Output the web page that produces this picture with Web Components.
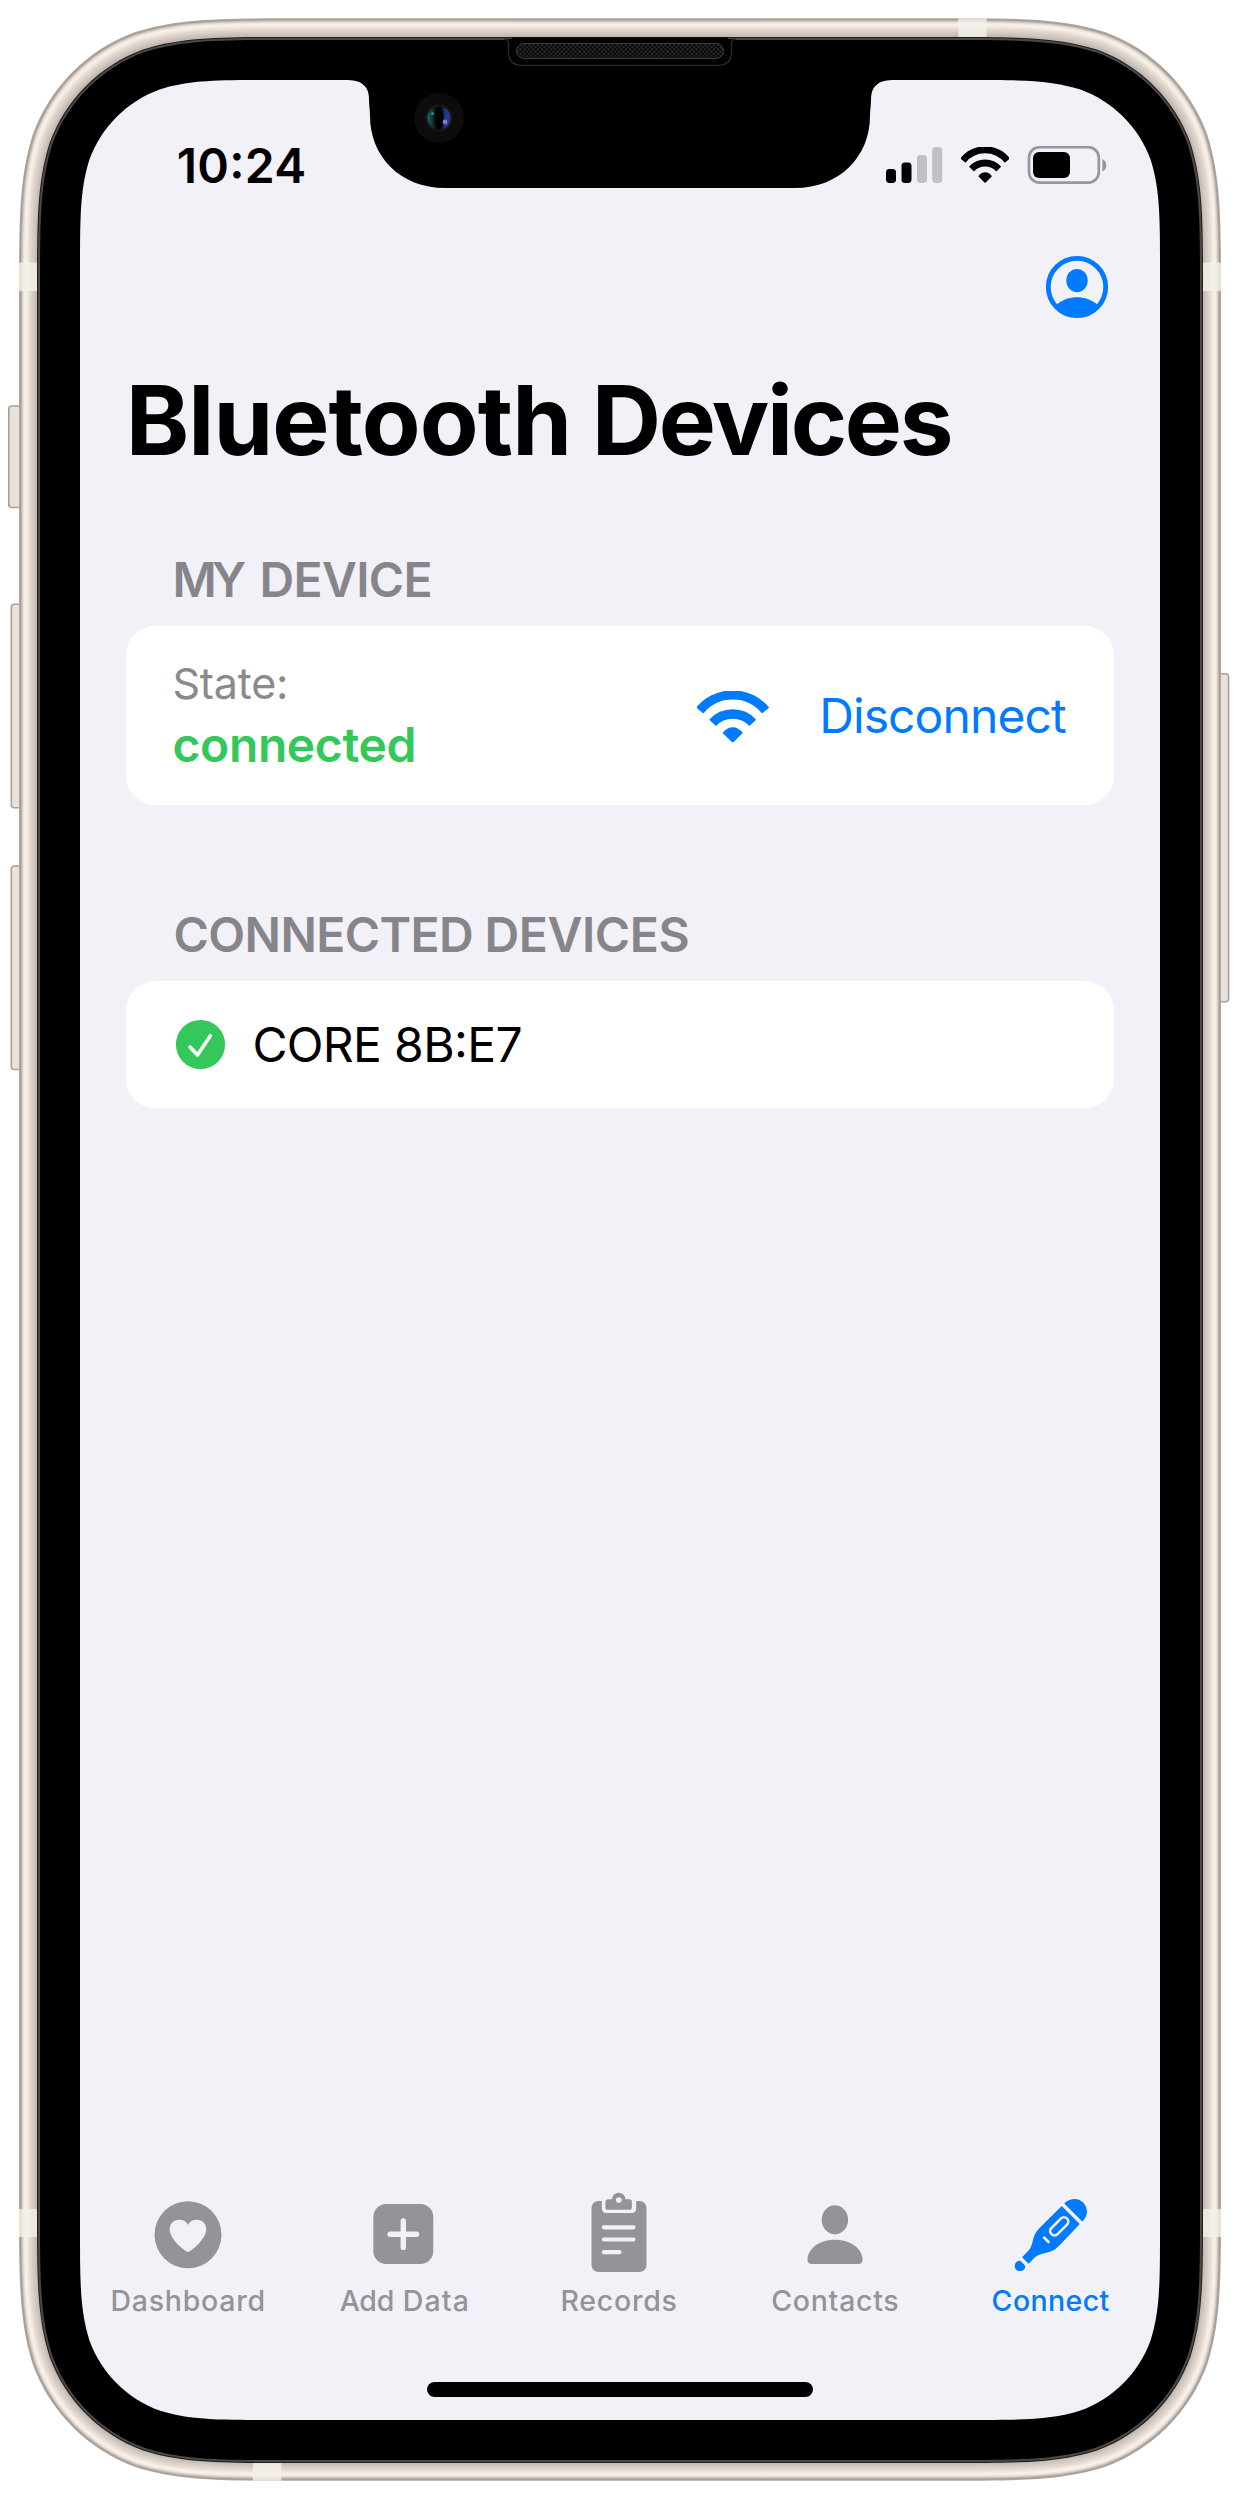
<!DOCTYPE html>
<html lang="en">
<head>
<meta charset="utf-8">
<title>Bluetooth Devices</title>
<style>
  body { margin: 0; background: #fff; font-family: Inter, "Liberation Sans", sans-serif; }
</style>
</head>
<body>
<phone-frame>
  <status-bar slot="status" time="10:24"></status-bar>
  <nav-bar slot="nav" heading="Bluetooth Devices" w="434.5,31.5,353"></nav-bar>
  <list-section heading="MY DEVICE" w="70.5,16.5,168"></list-section>
  <list-section heading="CONNECTED DEVICES" w="296.5,15.5,200"></list-section>
  <tab-bar slot="tabs">
    <tab-item icon="heart" label="Dashboard" w="151"></tab-item>
    <tab-item icon="plus" label="Add Data" w="53,12,63"></tab-item>
    <tab-item icon="clipboard" label="Records" w="114"></tab-item>
    <tab-item icon="person" label="Contacts" w="126"></tab-item>
    <tab-item icon="thermometer" label="Connect" w="117" active></tab-item>
  </tab-bar>
</phone-frame>
<template id="rows">
  <device-state-row label="State:" state="connected" action="Disconnect"></device-state-row>
  <device-row name="CORE 8B:E7" w="124.5,17,124.5"></device-row>
</template>

<script>
/* Each section receives its own row before the elements are upgraded. */
{
  const rows = [...document.getElementById('rows').content.children];
  document.querySelectorAll('list-section').forEach((s, i) => s.append(rows[i]));
}

const wifiShape = (sw) => `
  <path d="M699.8 710 A42.6 42.6 0 0 1 765.6 710" fill="none" stroke="currentColor" stroke-width="${sw}"/>
  <path d="M712.6 722.3 A27.4 27.4 0 0 1 752.8 722.3" fill="none" stroke="currentColor" stroke-width="${sw}"/>
  <path d="M722.6 732.4 C728 724.8 737.4 724.8 742.8 732.4 L733.6 741.6 Q732.7 742.4 731.8 741.6Z" fill="currentColor"/>`;

const ICONS = {
  wifi: { box: '697 690.5 71.6 52', w: 71.6, h: 52, art: wifiShape(9.3) },
  wifiSmall: { box: '697 690.5 71.6 52', w: 48.4, h: 36.2, art: wifiShape(9.8) },
  signal: { box: '886 147 57 36', w: 57, h: 36, art: `
    <rect x="886" y="169" width="10" height="14" rx="3.4"/><rect x="901.5" y="162.5" width="10" height="20.5" rx="3.4"/>
    <g fill="#c1c0c5"><rect x="917" y="155" width="10" height="28" rx="3.4"/><rect x="932.2" y="147" width="10" height="36" rx="3.4"/></g>` },
  battery: { box: '1027 146 80 38', w: 80, h: 38, art: `
    <rect x="1029" y="147.2" width="69.8" height="35.4" rx="10.5" fill="none" stroke="#98979c" stroke-width="2.7"/>
    <rect x="1033" y="152" width="37" height="26" rx="6"/>
    <path d="M1102.3 159 C1107.6 161 1107.6 169.5 1102.3 171.5Z" fill="#98979c"/>` },
  profile: { box: '1045 255 64 64', w: 64, h: 64, art: `
    <circle cx="1077" cy="287" r="28.7" fill="none" stroke="currentColor" stroke-width="4.8"/>
    <ellipse cx="1077" cy="280.6" rx="10.7" ry="11.7"/>
    <path d="M1056.5 305 C1062 299.6 1070 297.3 1077 297.3 C1084 297.3 1092 299.6 1097.5 305 L1100 307 A31 31 0 0 1 1054 307Z"/>` },
  check: { box: '175 1019 51 51', w: 51, h: 51, art: `
    <circle cx="200.5" cy="1044.5" r="24.6"/>
    <path d="M190 1047 L197.5 1055 L210.4 1035.7" fill="none" stroke="#fff" stroke-width="3.6" stroke-linecap="round" stroke-linejoin="round"/>` },
  heart: { box: '142.3 2190 90 90', w: 90, h: 90, art: `
    <circle cx="187.3" cy="2234.7" r="33.5"/>
    <path fill="#f2f1f7" d="M187.3 2252 C185 2251.5 169 2240 169 2229 C169 2223.5 173 2219.7 178.5 2219.7 C182.5 2219.7 185.8 2221.6 187.3 2224.8 C188.8 2221.6 192 2219.7 196 2219.7 C201.5 2219.7 205.5 2223.5 205.5 2229 C205.5 2240 189.6 2251.5 187.3 2252Z"/>` },
  plus: { box: '358.7 2190 90 90', w: 90, h: 90, art: `
    <rect x="373" y="2204" width="60" height="60" rx="13"/>
    <path d="M389.8 2234.2 H416.2 M403 2221 V2247.4" stroke="#f2f1f7" stroke-width="5.4" stroke-linecap="round"/>` },
  clipboard: { box: '-16.5 15 270 270', w: 90, h: 90, art: `
    <rect x="36" y="48" width="165" height="213" rx="21"/>
    <path d="M67 40 V70 Q67 84 81 84 H156 Q170 84 170 70 V40Z" fill="#f2f1f7"/>
    <rect x="78" y="42.5" width="79" height="32" rx="8"/><path d="M97 44 A20.5 20.5 0 0 1 138 44Z"/>
    <circle cx="118" cy="45" r="8.5" fill="#f2f1f7"/>
    <path d="M73 127 H162 M73 163.5 H162 M73 201.5 H120" stroke="#f2f1f7" stroke-width="12.5" stroke-linecap="round"/>` },
  person: { box: '790.3 2190 90 90', w: 90, h: 90, art: `
    <ellipse cx="835.2" cy="2219.8" rx="13.2" ry="14.6"/>
    <path d="M812 2264 Q807.8 2264 807.8 2259.6 C807.8 2250 818 2239.7 835.3 2239.7 C852.6 2239.7 862.8 2250 862.8 2259.6 Q862.8 2264 858.6 2264Z"/>` },
  thermometer: { box: '-11.7 0 270 270', w: 90, h: 90, art: `
    <path d="M163 40.5 C179 24 204 22 219 37 C235 53 236 78 217 94.5Z"/>
    <path d="M155.5 48 L209.5 102 L147 168 C133 182 121 186 99 190.5 C86 194 79 198 72 205 L56 221 L36.5 201.5 L52 186 C61 177 65 168 68 155 C71 138 77 126 89 114Z"/>
    <path d="M31 212 L46 227 C46 237 40 243 30 243 C20 243 14.5 236 14.5 228 C14.5 219 21 212 31 212Z"/>
    <rect x="115" y="96" width="66" height="26" rx="13" transform="rotate(-45 148 109)" fill="none" stroke="#f2f1f7" stroke-width="7.6"/>
    <path d="M102.5 142.5 L116 156" stroke="#f2f1f7" stroke-width="7.6" stroke-linecap="round"/>` }
};

/* Outline of a rectangle with continuous-curvature corners. */
function smoothRect(x, y, w, h, r) {
  const corner = [[1.528665, 0], [1.08849, 0, .868407, 0, .631494, .0749114],
    [.372824, .16906, .16906, .372824, .0749114, .631494], [0, .868407, 0, 1.08849, 0, 1.528665]];
  const back = [[0, 1.528665], [0, 1.08849, 0, .868407, .0749114, .631494],
    [.16906, .372824, .372824, .16906, .631494, .0749114], [.868407, 0, 1.08849, 0, 1.528665, 0]];
  const place = (pts, f) => {
    const o = [];
    for (let i = 0; i < pts.length; i += 2) o.push(f(pts[i] * r, pts[i + 1] * r).map(n => n.toFixed(2)).join(' '));
    return o.join(' ');
  };
  const seg = (c, f) => c.map((p, i) => (i ? 'C' : 'L') + place(p, f)).join('');
  const d = seg(corner, (a, b) => [x + w - a, y + b]) + seg(back, (a, b) => [x + w - a, y + h - b]) +
            seg(corner, (a, b) => [x + a, y + h - b]) + seg(back, (a, b) => [x + a, y + b]);
  return 'M' + d.slice(1) + 'Z';
}

class Base extends HTMLElement {
  connectedCallback() {
    if (this.shadowRoot) return;
    this.attachShadow({ mode: 'open' }).innerHTML = this.view();
  }
  a(n) { return this.getAttribute(n) || ''; }
}

/* Single line of text whose words are tracked to given ink widths: "word" or "word,gap,word". */
customElements.define('tracked-text', class extends Base {
  view() { return `<style>:host{display:block;white-space:pre;line-height:1}.line{display:block}</style><span class="line"></span>`; }
  connectedCallback() {
    super.connectedCallback();
    const line = this.shadowRoot.querySelector('.line'), cs = getComputedStyle(this);
    const sizes = this.a('w').split(',').map(Number);
    const words = sizes.length > 1 ? this.a('text').split(' ') : [this.a('text')];
    const c = document.createElement('canvas').getContext('2d');
    c.font = `${cs.fontWeight} ${cs.fontSize} ${cs.fontFamily}`;
    const spaceWidth = c.measureText(' ').width;
    const parts = words.map((t, i) => {
      const m = c.measureText(t), L = m.actualBoundingBoxLeft, R = m.actualBoundingBoxRight;
      return { t, L, rest: m.width - R, ls: (sizes[i * 2] - L - R) / (t.length - 1) };
    });
    let html = '';
    parts.forEach((p, i) => {
      if (i) {
        const q = parts[i - 1];
        const ls = sizes[i * 2 - 1] - q.rest - q.ls - spaceWidth + p.L;
        html += `<span style="letter-spacing:${ls.toFixed(3)}px"> </span>`;
      }
      html += `<span style="letter-spacing:${p.ls.toFixed(3)}px">${p.t}</span>`;
    });
    const last = parts[parts.length - 1];
    line.innerHTML = html;
    line.style.margin = `0 ${(-last.ls - last.rest).toFixed(2)}px 0 ${parts[0].L.toFixed(2)}px`;
  }
});

customElements.define('ui-icon', class extends Base {
  view() {
    const i = ICONS[this.a('name')];
    return `<style>:host{display:block;flex:none}svg{display:block}</style>
      <svg width="${i.w}" height="${i.h}" viewBox="${i.box}" preserveAspectRatio="none" fill="currentColor">${i.art}</svg>`;
  }
});

customElements.define('phone-frame', class extends Base {
  view() {
    const tones = ['#aea69f','#a69d96','#beb5ae','#d9d0c9','#e9e1da','#f3ebe4','#f8f1ea','#f5eee7','#f0e8e1','#ebe3db','#e5dcd4','#e0d7cf','#dcd3ca','#d8cec6','#d4cac1','#d0c6bd','#cbc1b8','#c4bab1'];
    const metal = tones.map((t, i) => `<path fill="${t}" d="${smoothRect(19 + i, 18.3 + i, 1202 - 2 * i, 2462.5 - 2 * i, 184 - i)}"/>`).join('');
    const band = (x, y, w, h) => `<rect x="${x}" y="${y}" width="${w}" height="${h}" fill="#f4f1ea" fill-opacity=".8"/>`;
    const button = (x, y, w, h) => `<rect x="${x}" y="${y}" width="${w}" height="${h}" rx="3" fill="#e9e2db" stroke="#aaa099" stroke-width="1.6"/>`;
    return `<style>
      :host{display:grid;width:1240px;height:2500px;grid-template:100% / 100%}
      svg,.screen{grid-area:1/1}
      svg{display:block}
      .screen{box-sizing:border-box;margin:80px;display:flex;flex-direction:column;color:#000}
      main{flex:1;display:flex;flex-direction:column;gap:116.2px;padding:98px 46px 0;box-sizing:border-box}
      .home{width:386px;height:14.4px;border-radius:8px;background:#000;margin:0 auto 23.3px;flex:none}
    </style>
    <svg width="1240" height="2500" viewBox="0 0 1240 2500">
      <defs>
        <pattern id="mesh" width="4.4" height="4.4" patternUnits="userSpaceOnUse"><rect width="4.4" height="4.4" fill="#080808"/><circle cx="1.1" cy="1.1" r="1" fill="#333"/><circle cx="3.3" cy="3.3" r="1" fill="#333"/></pattern>
        <linearGradient id="lens"><stop offset="0" stop-color="#1a6a5c"/><stop offset=".35" stop-color="#041210"/><stop offset=".55" stop-color="#02040c"/><stop offset=".8" stop-color="#1b3f9c"/><stop offset="1" stop-color="#3d2a78"/></linearGradient>
      </defs>
      ${button(8.8, 406, 16, 101.5)}${button(11.3, 604.3, 14, 203.5)}${button(11.3, 866, 14, 203.5)}${button(1214, 673.8, 14.6, 328)}
      ${metal}
      ${band(19, 262.5, 20, 28.5)}${band(1201, 262.5, 20, 28.5)}${band(19, 2209, 20, 28)}${band(1201, 2209, 20, 28)}
      ${band(958.3, 18.3, 28.5, 19)}${band(253, 2462, 28.5, 18.8)}
      <path fill="#1d1d1d" d="${smoothRect(37, 37, 1166, 2426, 168)}"/>
      <path fill="#4a4a4a" d="${smoothRect(38, 38, 1164, 2424, 167)}"/>
      <path fill="#000" d="${smoothRect(40, 40, 1160, 2420, 165)}"/>
      <path d="M504 39 Q508.5 39 508.5 44 V52 Q508.5 65.3 522 65.3 H718 Q731.5 65.3 731.5 52 V44 Q731.5 39 736 39" fill="#000" stroke="#2b2b2b" stroke-width="1.3"/>
      <rect x="512" y="37.5" width="216" height="3" fill="#050505"/>
      <rect x="516.5" y="43.5" width="207" height="15" rx="7.5" fill="url(#mesh)" stroke="#3a3a3a" stroke-width="1"/>
      <path fill="#f2f1f7" d="${smoothRect(80, 80, 1080, 2340, 126)}"/>
      <path fill="#000" d="M345 79 V80 C361 80 369 85 369 100 C369 105 370 110 370 116 C370 156 400 188 445 188 H795 C840 188 870 156 870 116 C870 110 871 105 871 100 C871 85 879 80 895 80 V79Z"/>
      <circle cx="439" cy="118" r="25" fill="#0c0c0d"/><circle cx="439" cy="118" r="13.5" fill="#17171a"/><circle cx="439" cy="118" r="11.5" fill="url(#lens)"/>
      <ellipse cx="439" cy="118" rx="4.5" ry="11.5" fill="#000"/>
      <circle cx="432.5" cy="113.5" r="1.5" fill="#3b86a0"/><circle cx="445" cy="122" r="2.4" fill="#8a78b0"/>
    </svg>
    <div class="screen">
      <slot name="status"></slot><slot name="nav"></slot>
      <main><slot></slot></main>
      <slot name="tabs"></slot><div class="home"></div>
    </div>`;
  }
});

customElements.define('status-bar', class extends Base {
  view() {
    return `<style>
      :host{display:flex;justify-content:space-between;height:108px;box-sizing:border-box;padding:61.5px 53px 0 98.8px;flex:none;font-weight:600;font-size:48px}
      tracked-text{font-feature-settings:"case"}
      .icons{display:flex;height:38px;padding-top:4.5px;align-items:center}
      .signal{margin-right:17.7px}.wifi{margin-right:17.9px}
    </style>
    <tracked-text text="${this.a('time')}" w="125.5"></tracked-text>
    <div class="icons"><ui-icon class="signal" name="signal"></ui-icon><ui-icon class="wifi" name="wifiSmall"></ui-icon><ui-icon name="battery"></ui-icon></div>`;
  }
});

customElements.define('nav-bar', class extends Base {
  view() {
    return `<style>
      :host{display:flex;flex-direction:column;flex:none;height:280px;padding:67px 51px 0 51.7px;box-sizing:border-box}
      ui-icon{align-self:flex-end;color:#007aff}
      tracked-text{font-size:96px;font-weight:700;margin-top:53px}
    </style>
    <ui-icon name="profile"></ui-icon>
    <tracked-text text="${this.a('heading')}" w="${this.a('w')}"></tracked-text>`;
  }
});

customElements.define('list-section', class extends Base {
  view() {
    return `<style>
      :host{display:block}
      tracked-text{font-size:48px;font-weight:600;color:#85858b;margin:-10.5px 0 22.5px 49.5px}
      .card{background:#fff;border-radius:29px;overflow:hidden}
    </style>
    <tracked-text text="${this.a('heading')}" w="${this.a('w')}"></tracked-text>
    <div class="card"><slot></slot></div>`;
  }
});

customElements.define('device-state-row', class extends Base {
  view() {
    return `<style>
      :host{display:flex;align-items:center;height:179px;padding:0 48px 0 48.5px;box-sizing:border-box}
      .info{flex:1;display:flex;flex-direction:column;gap:15.5px}
      .label{font-size:43px;color:#8a8a8e}
      .state{font-size:48px;font-weight:600;color:#34c759}
      ui-icon,.action{color:#007aff}
      ui-icon{margin-right:54.5px;margin-top:2px}
      .action{font-size:48px}
    </style>
    <div class="info"><tracked-text class="label" text="${this.a('label')}" w="111.5"></tracked-text>
    <tracked-text class="state" text="${this.a('state')}" w="239"></tracked-text></div>
    <ui-icon name="wifi"></ui-icon>
    <tracked-text class="action" text="${this.a('action')}" w="242.8"></tracked-text>`;
  }
});

customElements.define('device-row', class extends Base {
  view() {
    return `<style>
      :host{display:flex;align-items:center;height:127px;padding:0 49px;box-sizing:border-box;gap:28.5px}
      ui-icon{color:#34c759}
      tracked-text{font-size:48px;font-feature-settings:"case"}
    </style>
    <ui-icon name="check"></ui-icon><tracked-text text="${this.a('name')}" w="${this.a('w')}"></tracked-text>`;
  }
});

customElements.define('tab-bar', class extends Base {
  view() {
    return `<style>:host{display:grid;grid-template-columns:repeat(5,1fr);flex:none;height:192.3px;margin-right:1px}</style><slot></slot>`;
  }
});

customElements.define('tab-item', class extends Base {
  view() {
    return `<style>
      :host{display:flex;flex-direction:column;align-items:center;gap:6.7px;color:#939499;font-size:28.5px;font-weight:500}
      :host([active]){color:#007aff}
    </style>
    <ui-icon name="${this.a('icon')}"></ui-icon>
    <tracked-text text="${this.a('label')}" w="${this.a('w')}"></tracked-text>`;
  }
});
</script>
</body>
</html>
